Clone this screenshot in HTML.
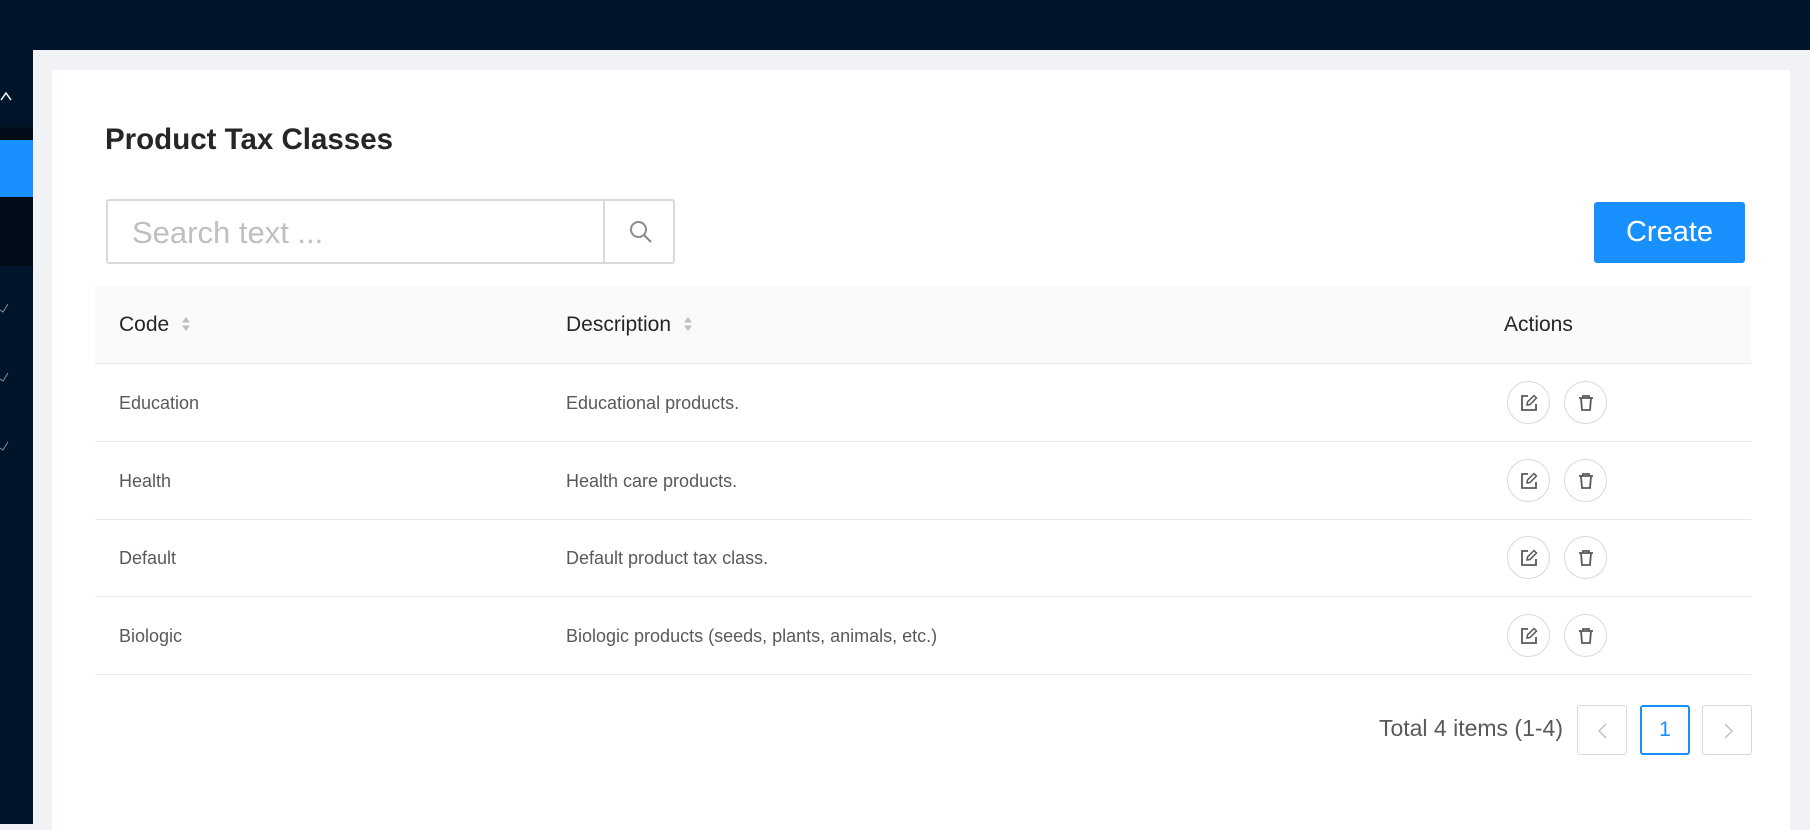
<!DOCTYPE html>
<html><head><meta charset="utf-8"><style>
*{box-sizing:border-box;margin:0;padding:0}
body{width:1810px;height:824px;overflow:hidden;background:#f0f2f5;font-family:"Liberation Sans",sans-serif;position:relative}
.side{position:absolute;left:0;top:0;width:33px;height:824px;background:#001529}
.top{position:absolute;left:33px;top:0;right:0;height:50px;background:#001529}
.card{position:absolute;left:52px;top:70px;width:1738px;height:760px;background:#fff}
.abs{position:absolute}
.title{left:53px;top:53px;font-size:29.5px;font-weight:bold;color:#262626}
.search{left:54px;top:129px;width:569px;height:65px;border:2px solid #d9d9d9;border-radius:3px}
.search span{position:absolute;left:24px;top:14px;font-size:31px;color:#bfbfbf}
.search .btn{position:absolute;left:495px;top:0;width:2px;height:61px;background:#d9d9d9}
.create{left:1542px;top:132px;width:151px;height:61px;background:#1890ff;border-radius:3px;color:#fff;font-size:29px;text-align:center;line-height:61px}
.thead{left:43px;top:216px;width:1656px;height:78px;background:#fafafa;border-bottom:1px solid #e8e8e8}
.th{font-size:21px;color:#262626;top:27px}
.row{left:43px;width:1656px;height:78px;border-bottom:1px solid #e8e8e8}
.td{font-size:18px;color:#595959;top:29px}
.circ{width:43px;height:43px;border:1px solid #d9d9d9;border-radius:50%;top:17px}
.circ svg{position:absolute;left:11px;top:11px}
.pg{top:635px;width:50px;height:50px;border:1px solid #d9d9d9;border-radius:3px;text-align:center;line-height:48px;font-size:21px;color:#bbb}
.pg svg{position:absolute;left:18px;top:17px}
.sort{display:inline-block;vertical-align:middle;margin-left:12px;margin-top:-3px}
</style></head><body>
<div class="side">
<svg class="abs" style="left:0;top:90px" width="14" height="12"><path d="M1 10 L6 3 L11 10" stroke="#fff" stroke-width="1.5" fill="none"/></svg>
<div class="abs" style="left:0;top:127px;width:33px;height:13px;background:#000c17"></div>
<div class="abs" style="left:0;top:140px;width:33px;height:57px;background:#1890ff"></div>
<div class="abs" style="left:0;top:197px;width:33px;height:69px;background:#000c17"></div>
<svg class="abs" style="left:0;top:300px" width="12" height="160"><path d="M0 10 L3 12 L8 4 M0 79 L3 81 L8 73 M0 148 L3 150 L8 142" stroke="#889" stroke-width="1" fill="none"/></svg>
</div>
<div class="top"></div>
<div class="card">
<div class="abs title">Product Tax Classes</div>
<div class="abs search"><span>Search text ...</span><div class="btn"></div>
<svg class="abs" style="left:520px;top:18px" width="26" height="26" viewBox="0 0 26 26"><circle cx="10.5" cy="10.5" r="7.5" stroke="#8c8c8c" stroke-width="2" fill="none"/><path d="M16 16 L23 23" stroke="#8c8c8c" stroke-width="2.2"/></svg></div>
<div class="abs create">Create</div>
<div class="abs thead">
<div class="abs th" style="left:24px">Code<svg class="sort" width="10" height="18"><path d="M1 7.5 L5 2 L9 7.5Z M1 10.5 L5 16 L9 10.5Z" fill="#bfbfbf"/></svg></div>
<div class="abs th" style="left:471px">Description<svg class="sort" width="10" height="18"><path d="M1 7.5 L5 2 L9 7.5Z M1 10.5 L5 16 L9 10.5Z" fill="#bfbfbf"/></svg></div>
<div class="abs th" style="left:1409px">Actions</div>
</div>
<div class="abs row" style="top:294px"><div class="abs td" style="left:24px">Education</div><div class="abs td" style="left:471px">Educational products.</div>
<div class="abs circ" style="left:1412px"><svg width="20" height="20" viewBox="0 0 20 20"><path d="M9 3H3V17H17V11" stroke="#595959" stroke-width="1.8" fill="none"/><path d="M8 12L8.5 9L15 2.5L17.5 5L11 11.5Z" stroke="#595959" stroke-width="1.5" fill="none"/></svg></div>
<div class="abs circ" style="left:1469px"><svg width="20" height="20" viewBox="0 0 20 20"><path d="M3 5H17M7 5V3H13V5M5 5L6 17H14L15 5" stroke="#595959" stroke-width="1.8" fill="none"/></svg></div></div>
<div class="abs row" style="top:372px"><div class="abs td" style="left:24px">Health</div><div class="abs td" style="left:471px">Health care products.</div>
<div class="abs circ" style="left:1412px"><svg width="20" height="20" viewBox="0 0 20 20"><path d="M9 3H3V17H17V11" stroke="#595959" stroke-width="1.8" fill="none"/><path d="M8 12L8.5 9L15 2.5L17.5 5L11 11.5Z" stroke="#595959" stroke-width="1.5" fill="none"/></svg></div>
<div class="abs circ" style="left:1469px"><svg width="20" height="20" viewBox="0 0 20 20"><path d="M3 5H17M7 5V3H13V5M5 5L6 17H14L15 5" stroke="#595959" stroke-width="1.8" fill="none"/></svg></div></div>
<div class="abs row" style="top:449px"><div class="abs td" style="left:24px">Default</div><div class="abs td" style="left:471px">Default product tax class.</div>
<div class="abs circ" style="left:1412px"><svg width="20" height="20" viewBox="0 0 20 20"><path d="M9 3H3V17H17V11" stroke="#595959" stroke-width="1.8" fill="none"/><path d="M8 12L8.5 9L15 2.5L17.5 5L11 11.5Z" stroke="#595959" stroke-width="1.5" fill="none"/></svg></div>
<div class="abs circ" style="left:1469px"><svg width="20" height="20" viewBox="0 0 20 20"><path d="M3 5H17M7 5V3H13V5M5 5L6 17H14L15 5" stroke="#595959" stroke-width="1.8" fill="none"/></svg></div></div>
<div class="abs row" style="top:527px"><div class="abs td" style="left:24px">Biologic</div><div class="abs td" style="left:471px">Biologic products (seeds, plants, animals, etc.)</div>
<div class="abs circ" style="left:1412px"><svg width="20" height="20" viewBox="0 0 20 20"><path d="M9 3H3V17H17V11" stroke="#595959" stroke-width="1.8" fill="none"/><path d="M8 12L8.5 9L15 2.5L17.5 5L11 11.5Z" stroke="#595959" stroke-width="1.5" fill="none"/></svg></div>
<div class="abs circ" style="left:1469px"><svg width="20" height="20" viewBox="0 0 20 20"><path d="M3 5H17M7 5V3H13V5M5 5L6 17H14L15 5" stroke="#595959" stroke-width="1.8" fill="none"/></svg></div></div>
<div class="abs" style="right:227px;top:645px;font-size:23px;color:#595959">Total 4 items (1-4)</div>
<div class="abs pg" style="left:1525px"><svg width="14" height="16"><path d="M10 1 L3 8 L10 15" stroke="#bbb" stroke-width="1.3" fill="none"/></svg></div>
<div class="abs pg" style="left:1588px;border:2px solid #1890ff;line-height:46px;color:#1890ff">1</div>
<div class="abs pg" style="left:1650px"><svg width="14" height="16"><path d="M4 1 L11 8 L4 15" stroke="#bbb" stroke-width="1.3" fill="none"/></svg></div>
</div>
</body></html>
